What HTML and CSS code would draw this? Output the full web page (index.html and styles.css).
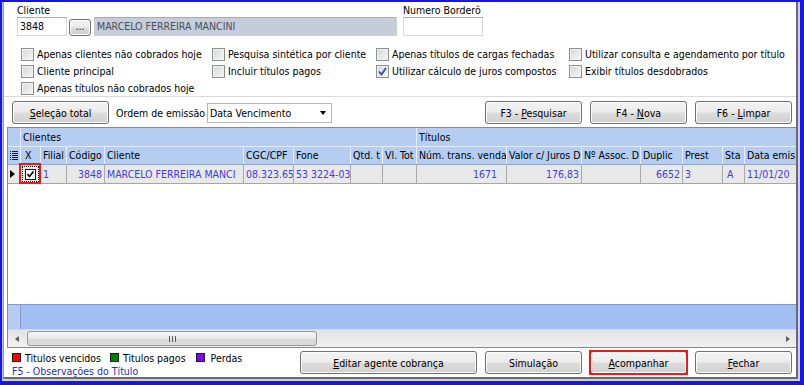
FILE: index.html
```html
<!DOCTYPE html>
<html lang="pt-BR">
<head>
    <meta charset="UTF-8">
    <meta name="viewport" content="width=device-width, initial-scale=1.0">
    <title>Cobrança - Seleção de títulos</title>
    <link rel="stylesheet" href="styles.css">
</head>
<body>
<div class="window">
  <div class="frame">
    <div class="content">

      <!-- cliente / bordero -->
      <div class="head">
        <div class="field">
          <div class="label">Cliente</div>
          <div class="inputs">
            <div class="input code">3848</div>
            <div class="btn dots"><span>...</span></div>
            <div class="input name">MARCELO FERREIRA MANCINI</div>
          </div>
        </div>
        <div class="field bordero">
          <div class="label">Numero Borderô</div>
          <div class="input bordero-input"></div>
        </div>
      </div>

      <!-- filtros -->
      <div class="options">
        <div class="opt"><span class="cb"></span>Apenas clientes não cobrados hoje</div>
        <div class="opt"><span class="cb"></span>Pesquisa sintética por cliente</div>
        <div class="opt"><span class="cb"></span>Apenas títulos de cargas fechadas</div>
        <div class="opt"><span class="cb"></span>Utilizar consulta e agendamento por título</div>
        <div class="opt"><span class="cb"></span>Cliente principal</div>
        <div class="opt"><span class="cb"></span>Incluir títulos pagos</div>
        <div class="opt"><span class="cb checked"><svg width="9" height="9" viewBox="0 0 9 9"><path d="M1 4.5 L3.5 7.5 L8 1" fill="none" stroke="#2f52a8" stroke-width="1.8"/></svg></span>Utilizar cálculo de juros compostos</div>
        <div class="opt"><span class="cb"></span>Exibir títulos desdobrados</div>
        <div class="opt"><span class="cb"></span>Apenas títulos não cobrados hoje</div>
      </div>

      <div class="sep"></div>

      <!-- barra de acoes -->
      <div class="toolbar">
        <div class="btn wide"><span><u>S</u>eleção total</span></div>
        <span class="order-label">Ordem de emissão</span>
        <div class="select"><span>Data Vencimento</span><span class="arrow"></span></div>
        <div class="actions">
          <div class="btn wide"><span>F3 - <u>P</u>esquisar</span></div>
          <div class="btn wide"><span>F4 - <u>N</u>ova</span></div>
          <div class="btn wide"><span>F6 - <u>L</u>impar</span></div>
        </div>
      </div>

      <!-- grade -->
      <div class="grid">
        <div class="gr grp">
          <div class="c ind"></div>
          <div class="c">Clientes</div>
          <div class="c">Títulos</div>
        </div>
        <div class="gr hdr">
          <div class="c ind">
            <svg width="9" height="9" viewBox="0 0 9 9"><path d="M0 0.5h1M2 0.5h6M0 2.5h1M2 2.5h6M0 4.5h1M2 4.5h6M0 6.5h1M2 6.5h6M0 8.5h1M2 8.5h6" stroke="#1c1c1c" stroke-width="1"/></svg>
          </div>
          <div class="c x">X</div>
          <div class="c">Filial</div>
          <div class="c">Código</div>
          <div class="c">Cliente</div>
          <div class="c">CGC/CPF</div>
          <div class="c">Fone</div>
          <div class="c">Qtd. t</div>
          <div class="c">Vl. Tot</div>
          <div class="c">Núm. trans. venda</div>
          <div class="c">Valor c/ Juros D</div>
          <div class="c">Nº Assoc. D</div>
          <div class="c">Duplic</div>
          <div class="c">Prest</div>
          <div class="c">Sta</div>
          <div class="c">Data emis</div>
        </div>
        <div class="gr row">
          <div class="c ind"><span class="cursor"></span></div>
          <div class="c x mark"><span class="focus"><span class="tick"><svg width="9" height="9" viewBox="0 0 9 9"><path d="M1.5 4 L3.5 6.5 L7.5 1.5" fill="none" stroke="#000" stroke-width="1.7"/></svg></span></span></div>
          <div class="c">1</div>
          <div class="c num">3848</div>
          <div class="c">MARCELO FERREIRA MANCI</div>
          <div class="c">08.323.65</div>
          <div class="c">53 3224-03</div>
          <div class="c"></div>
          <div class="c"></div>
          <div class="c num trans">1671</div>
          <div class="c num">176,83</div>
          <div class="c"></div>
          <div class="c num">6652</div>
          <div class="c">3</div>
          <div class="c sta">A</div>
          <div class="c">11/01/20</div>
        </div>
        <div class="empty"></div>
        <div class="gr foot">
          <div class="c ind"></div>
          <div class="c"></div>
        </div>
        <div class="hscroll">
          <span class="sb-btn"><span class="arr-left"></span></span>
          <span class="thumb"><span class="grip"></span></span>
          <span class="sb-track"></span>
          <span class="sb-btn"><span class="arr-right"></span></span>
        </div>
      </div>

      <!-- rodape -->
      <div class="footer">
        <div class="legend">
          <div class="legend-line">
            <span class="sq red"></span><span>Titulos vencidos</span>
            <span class="sq green"></span><span>Titulos pagos</span>
            <span class="sq purple"></span><span>Perdas</span>
          </div>
          <div class="legend-line hint">F5 - Observações do Título</div>
        </div>
        <div class="actions bottom">
          <div class="btn agent"><span><u>E</u>ditar agente cobrança</span></div>
          <div class="btn wide"><span>Simulação</span></div>
          <div class="btn wide marked"><span><u>A</u>companhar</span></div>
          <div class="btn wide"><span><u>F</u>echar</span></div>
        </div>
      </div>

    </div>
  </div>
</div>
</body>
</html>
```

FILE: styles.css
```css
* { box-sizing: border-box; }
body { margin: 0; background: #fff; font-family: "DejaVu Sans Condensed", "Liberation Sans", sans-serif; font-size: 10.5px; color: #000; }
u { text-decoration: underline; text-underline-offset: 1px; }

/* window frame */
.window { width: 804px; height: 385px; border-style: solid; border-color: #1414ee; border-width: 2px 4px 4px 2px; }
.frame { height: 100%; border-style: solid; border-color: #c0c6f2 #d2d2d2 #d2d2d2 #c0c6f2; border-width: 0 2px 2px 1px; }
.content {
    height: 100%;
    border-style: solid;
    border-color: #9b9b9b #6b6b6b #6b6b6b #9b9b9b;
    border-width: 0 2px 2px 1px;
    background: #fff;
    display: flex;
    flex-direction: column;
}

/* top fields */
.head { display: flex; padding-left: 13px; height: 34px; }
.label { height: 15px; line-height: 16px; white-space: nowrap; }
.inputs { display: flex; align-items: flex-start; }
.input {
    height: 19px;
    border: 1px solid #d5d8de;
    border-top-color: #abadb3;
    line-height: 17px;
    padding-left: 2px;
    background: #fff;
    white-space: nowrap;
}
.code { width: 50px; }
.name { width: 303px; margin-left: 3px; background: #c4cdd9; color: #4a4f5c; border-color: #c9ced6; border-top-color: #a8adb5; }
.bordero { margin-left: 6px; }
.bordero-input { width: 80px; }

/* buttons */
.btn {
    position: relative;
    height: 23px;
    border: 1px solid #707070;
    border-radius: 3px;
    background: linear-gradient(#f3f3f3 0%, #ebebeb 48%, #dddddd 52%, #cfcfcf 100%);
    box-shadow: inset 0 0 0 1px #fbfbfb;
    display: flex;
    align-items: center;
    justify-content: center;
    white-space: nowrap;
}
.dots { width: 22px; height: 17px; margin: 2px 0 0 2px; padding-bottom: 3px; }
.wide { width: 97px; }
.agent { width: 177px; }
.marked::after { content: ""; position: absolute; left: -2px; top: -2px; right: -2px; bottom: -2px; border: 2px solid #e41c1c; }

/* checkbox options */
.options {
    display: grid;
    grid-template-columns: 191px 164px 193px 1fr;
    grid-auto-rows: 17px;
    margin-top: 9px;
    padding-left: 17px;
}
.opt { display: flex; align-items: center; white-space: nowrap; padding-top: 1px; }
.cb {
    width: 13px;
    height: 13px;
    margin-right: 3px;
    flex: none;
    border: 1px solid #8e8f8f;
    background: linear-gradient(135deg, #d4d6da, #f7f7f7);
    box-shadow: inset 0 0 0 1px #f2f2f2;
    display: flex;
    align-items: center;
    justify-content: center;
}
.sep { height: 1px; background: #dadada; }

/* toolbar */
.toolbar { display: flex; align-items: center; height: 23px; margin: 4px 0 3px; padding: 0 4px 0 8px; }
.order-label { margin-left: 7px; width: 87px; white-space: nowrap; }
.select {
    width: 125px;
    height: 20px;
    margin-left: 4px;
    border: 1px solid #b5b5b5;
    background: #fff;
    display: flex;
    align-items: center;
    justify-content: space-between;
    padding: 0 5px 0 2px;
}
.arrow { border-top: 4px solid #000; border-left: 3.5px solid transparent; border-right: 3.5px solid transparent; }
.actions { display: flex; gap: 8px; margin-left: auto; }

/* data grid */
.grid {
    margin-left: 3px;
    border-style: solid;
    border-color: #828a98;
    border-width: 1px 0 1px 1px;
}
.gr {
    display: grid;
    grid-template-columns: 13px 20px 26px 38px 139px 50px 57px 32px 34px 90px 75px 59px 42px 40px 22px 51px;
}
.c {
    overflow: hidden;
    white-space: nowrap;
    padding: 0 2px;
    border-right: 1px solid #e6edf9;
}
.c:last-child { border-right: none; }
.grp { grid-template-columns: 13px 396px 1fr; height: 19px; line-height: 18px; background: #b4cdf0; border-bottom: 1px solid #e2eaf8; }
.hdr { height: 18px; line-height: 17px; background: #b4cdf0; border-bottom: 1px solid #98a6bd; }
.hdr .ind { display: flex; align-items: center; justify-content: center; padding: 0; }
.hdr .x { padding-left: 4px; }
.row { height: 19px; line-height: 18px; background: #e8e8e8; color: #3d3ddf; border-bottom: 1px solid #a5a5a5; }
.row .c { border-right-color: #a9a9a9; }
.row .ind { display: flex; align-items: center; padding-left: 2px; }
.cursor { border-left: 5px solid #000; border-top: 4.5px solid transparent; border-bottom: 4.5px solid transparent; }
.num { text-align: right; }
.trans { padding-right: 9px; }
.sta { padding-left: 4px; }
.mark { position: relative; overflow: visible; padding: 1px 1px 1px 1px; }
.mark::after { content: ""; position: absolute; left: -2px; top: -2px; right: -1px; bottom: -1px; border: 2px solid #e41c1c; }
.focus { display: flex; align-items: center; justify-content: center; height: 16px; border: 1px dotted #000; }
.tick { width: 11px; height: 11px; border: 1px solid #1c1c1c; background: #fff; display: flex; align-items: center; justify-content: center; }
.empty { height: 120px; background: #fff; }
.foot { grid-template-columns: 13px 1fr; height: 26px; background: #a3bef0; border-top: 1px solid #7e9bd3; border-bottom: 1px solid #c9d7f1; }
.foot .ind { background: #b7cbf3; border-right-color: #7e9bd3; }

/* horizontal scrollbar */
.hscroll { display: flex; align-items: center; height: 17px; background: linear-gradient(#e3e3e3, #f1f1f1); }
.sb-btn { width: 17px; height: 17px; display: flex; align-items: center; justify-content: center; }
.arr-left { border-right: 4px solid #5c5c5c; border-top: 3.5px solid transparent; border-bottom: 3.5px solid transparent; }
.arr-right { border-left: 4px solid #5c5c5c; border-top: 3.5px solid transparent; border-bottom: 3.5px solid transparent; }
.thumb {
    width: 290px;
    height: 15px;
    margin-left: 2px;
    border: 1px solid #979797;
    border-radius: 3px;
    background: linear-gradient(#f6f6f6, #e8e8e8 50%, #d8d8d8 51%, #dcdcdc);
    display: flex;
    align-items: center;
    justify-content: center;
}
.grip { width: 7px; height: 6px; background: repeating-linear-gradient(90deg, #5a5a5a 0 1px, transparent 1px 3px); }
.sb-track { flex: 1; }

/* footer */
.footer { display: flex; height: 29px; padding: 0 4px 0 8px; }
.legend { padding-top: 3px; }
.legend-line { display: flex; align-items: center; height: 13px; white-space: nowrap; }
.hint { height: 13px; color: #1f2fae; }
.sq { width: 9px; height: 9px; border: 1px solid #202020; margin-right: 4px; }
.sq.green { margin-left: 9px; }
.sq.purple { margin-left: 10px; margin-right: 6px; }
.red { background: #ff0000; }
.green { background: #008000; }
.purple { background: #8000ff; }
.bottom { margin-top: 3px; }
```
